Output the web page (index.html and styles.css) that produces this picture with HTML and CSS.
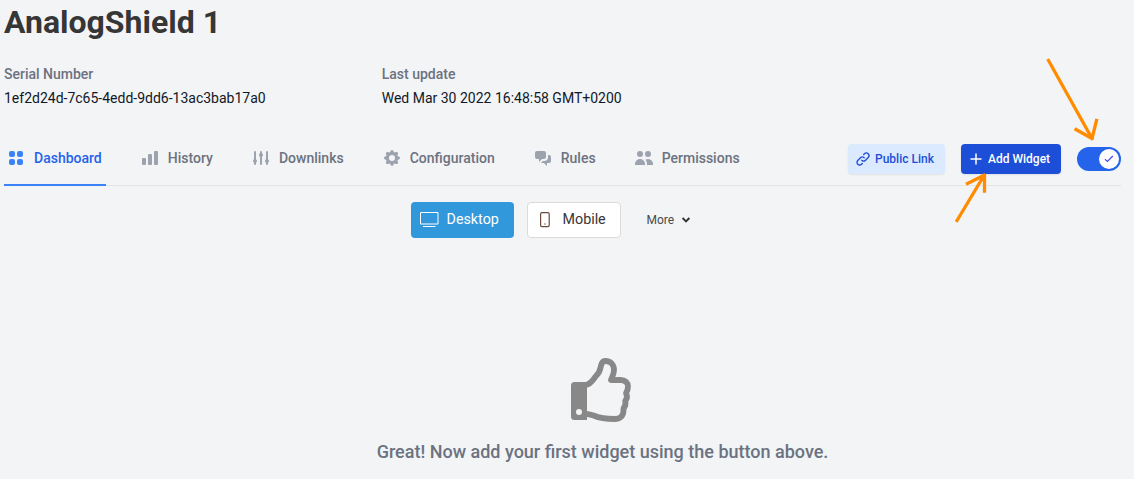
FILE: index.html
```html
<!DOCTYPE html>
<html lang="en">
<head>
<meta charset="utf-8">
<title>AnalogShield 1</title>
<link rel="stylesheet" href="styles.css">
</head>
<body>
<main class="page">
  <h1 class="title">AnalogShield 1</h1>
  <dl class="meta">
    <div class="meta-item"><dt>Serial Number</dt><dd>1ef2d24d-7c65-4edd-9dd6-13ac3bab17a0</dd></div>
    <div class="meta-item"><dt>Last update</dt><dd>Wed Mar 30 2022 16:48:58 GMT+0200</dd></div>
  </dl>
  <div class="bar">
    <nav class="tabs">
      <a class="tab active"><svg class="icon" viewBox="0 0 20 20"><path d="M5 3a2 2 0 00-2 2v2a2 2 0 002 2h2a2 2 0 002-2V5a2 2 0 00-2-2H5zM5 11a2 2 0 00-2 2v2a2 2 0 002 2h2a2 2 0 002-2v-2a2 2 0 00-2-2H5zM11 5a2 2 0 012-2h2a2 2 0 012 2v2a2 2 0 01-2 2h-2a2 2 0 01-2-2V5zM11 13a2 2 0 012-2h2a2 2 0 012 2v2a2 2 0 01-2 2h-2a2 2 0 01-2-2v-2z"/></svg><span>Dashboard</span></a>
      <a class="tab"><svg class="icon" viewBox="0 0 20 20"><path d="M2 11a1 1 0 011-1h2a1 1 0 011 1v5a1 1 0 01-1 1H3a1 1 0 01-1-1v-5zM8 7a1 1 0 011-1h2a1 1 0 011 1v9a1 1 0 01-1 1H9a1 1 0 01-1-1V7zM14 4a1 1 0 011-1h2a1 1 0 011 1v12a1 1 0 01-1 1h-2a1 1 0 01-1-1V4z"/></svg><span>History</span></a>
      <a class="tab"><svg class="icon" viewBox="0 0 20 20"><path d="M5 4a1 1 0 00-2 0v7.268a2 2 0 000 3.464V16a1 1 0 102 0v-1.268a2 2 0 000-3.464V4zM11 4a1 1 0 10-2 0v1.268a2 2 0 000 3.464V16a1 1 0 102 0V8.732a2 2 0 000-3.464V4zM16 3a1 1 0 011 1v7.268a2 2 0 010 3.464V16a1 1 0 11-2 0v-1.268a2 2 0 010-3.464V4a1 1 0 011-1z"/></svg><span>Downlinks</span></a>
      <a class="tab"><svg class="icon" viewBox="0 0 20 20"><path fill-rule="evenodd" d="M11.49 3.17c-.38-1.56-2.6-1.56-2.98 0a1.532 1.532 0 01-2.286.948c-1.372-.836-2.942.734-2.106 2.106.54.886.061 2.042-.947 2.287-1.561.379-1.561 2.6 0 2.978a1.532 1.532 0 01.947 2.287c-.836 1.372.734 2.942 2.106 2.106a1.532 1.532 0 012.287.947c.379 1.561 2.6 1.561 2.978 0a1.533 1.533 0 012.287-.947c1.372.836 2.942-.734 2.106-2.106a1.533 1.533 0 01.947-2.287c1.561-.379 1.561-2.6 0-2.978a1.532 1.532 0 01-.947-2.287c.836-1.372-.734-2.942-2.106-2.106a1.532 1.532 0 01-2.287-.947zM10 13a3 3 0 100-6 3 3 0 000 6z"/></svg><span>Configuration</span></a>
      <a class="tab"><svg class="icon" viewBox="0 0 20 20"><path d="M2 5a2 2 0 012-2h7a2 2 0 012 2v4a2 2 0 01-2 2H9l-3 3v-3H4a2 2 0 01-2-2V5z"/><path d="M15 7v2a4 4 0 01-4 4H9.828l-1.766 1.767c.28.149.599.233.938.233h2l3 3v-3h2a2 2 0 002-2V9a2 2 0 00-2-2h-1z"/></svg><span>Rules</span></a>
      <a class="tab"><svg class="icon" viewBox="0 0 20 20"><path d="M9 6a3 3 0 11-6 0 3 3 0 016 0zM17 6a3 3 0 11-6 0 3 3 0 016 0zM12.93 17c.046-.327.07-.66.07-1a6.97 6.970 0 00-1.5-4.33A5 5 0 0119 16v1h-6.070zM6 11a5 5 0 015 5v1H1v-1a5 5 0 015-5z"/></svg><span>Permissions</span></a>
    </nav>
    <div class="actions">
      <button class="btn public"><svg class="link" viewBox="0 0 24 24"><path d="M13.828 10.172a4 4 0 00-5.656 0l-4 4a4 4 0 105.656 5.656l1.102-1.101m-.758-4.899a4 4 0 005.656 0l4-4a4 4 0 00-5.656-5.656l-1.100 1.100"/></svg><span>Public Link</span></button>
      <button class="btn add"><svg class="plus" viewBox="0 0 12 12"><path d="M6 .5v11M.5 6h11"/></svg><span>Add Widget</span></button>
      <div class="toggle"><span class="knob"><svg class="check" viewBox="0 0 10 8"><path d="M1 4.300 3.400 6.500 8.800 1"/></svg></span></div>
    </div>
  </div>
  <div class="views">
    <button class="view desktop"><svg class="monitor" viewBox="0 0 19 16"><path d="M.5.500h17.500v11.500H.5zM3 14.500h12.500"/></svg><span>Desktop</span></button>
    <button class="view mobile"><svg class="phone" viewBox="0 0 10 16"><rect x=".6" y=".6" width="8.600" height="14" rx="1.300"/><path d="M4.200 12h1.500"/></svg><span>Mobile</span></button>
    <button class="more"><span>More</span><svg class="chevron" viewBox="0 0 8 6"><path d="m.6 1 3.400 3.400 3.400-3.400"/></svg></button>
  </div>
  <section class="empty">
    <svg class="thumb" viewBox="0 0 60 64"><path class="cuff" fill-rule="evenodd" d="M3.500 24H16v38H3.500A3.500 3.500 0 010 58.500v-31A3.500 3.500 0 013.500 24zM8 51a3 3 0 100 6 3 3 0 000-6z"/><path class="hand" d="M15 27c5-1 6-4 10-9 5-5 4-8 5.500-12 .7-2 2-3 4-3C40 3 43 7 43 12c0 4-2 7-3 10h9.500c5 0 7.500 3 7.500 6.500 0 3-1 5-2 6.500 1.500 3 1 6-.8 8 .8 3 0 5.500-1.700 7.500.5 7-2.500 10.500-9 10.500-10 0-15-1-21-3.500-3-1-5-1.500-7.500-1.500"/></svg>
    <p>Great! Now add your first widget using the button above.</p>
  </section>
</main>
<svg class="arrows" viewBox="0 0 1134 479"><path d="M1048.500 60.500l43.500 78M1076 129.500l16 9 4.500-18M957 220.500l27-45M967.500 183.500l17-8.500v16"/></svg>
</body>
</html>
```
FILE: styles.css
```css
* { box-sizing: border-box; }
body {
  margin: 0;
  height: 479px;
  overflow: hidden;
  position: relative;
  background: #f3f4f6;
  font-family: Roboto, sans-serif;
  font-size: 14px;
}
button { font: inherit; border: 0; margin: 0; padding: 0; background: none; }
svg { display: block; flex: none; overflow: visible; }
.page { width: 1121px; padding-left: 4px; }
.title { margin: 0; padding-top: 2px; height: 64px; font-size: 32px; line-height: 40px; font-weight: 700; color: #363636; }
.meta { margin: 0; display: grid; grid-template-columns: 377.7px 1fr; height: 68px; }
dt { line-height: 20px; font-weight: 500; color: #6b7280; }
dd { margin: 4px 0 0; line-height: 20px; color: #111827; }
.bar { height: 54px; display: flex; justify-content: space-between; border-bottom: 1px solid #e2e4e8; }
.tabs { display: flex; gap: 32.05px; }
.tab { height: 54px; padding: 0 4px 2px; display: flex; align-items: center; gap: 8px; color: #6b7280; font-weight: 500; white-space: nowrap; }
.tab.active { color: #2563eb; border-bottom: 2px solid #3b82f6; padding-bottom: 0; }
.icon { width: 20px; height: 20px; margin-left: -2px; fill: #9ca3af; }
.active .icon { fill: #3b82f6; }
.actions { display: flex; align-items: center; gap: 16px; padding-top: 1px; }
.btn { height: 30px; border-radius: 4px; padding: 0 11px 0 8px; display: flex; align-items: center; font-size: 12px; font-weight: 500; white-space: nowrap; box-shadow: 0 1px 2px rgba(0,0,0,.08); }
.public { width: 97px; background: #dbeafe; color: #1d4ed8; padding-left: 7px; gap: 4px; }
.add { width: 100px; background: #1d4ed8; color: #fff; padding-left: 9px; gap: 6px; }
.link { width: 16px; height: 16px; fill: none; stroke: #1d4ed8; stroke-width: 2; stroke-linecap: round; }
.plus { width: 12px; height: 12px; fill: none; stroke: #fff; stroke-width: 1.5; }
.toggle { width: 44px; height: 24px; border-radius: 12px; background: #2563eb; padding: 2px; display: flex; justify-content: flex-end; }
.knob { width: 20px; height: 20px; border-radius: 50%; background: #fff; display: flex; align-items: center; justify-content: center; }
.check { width: 10px; height: 8px; fill: none; stroke: #4f46e5; stroke-width: 1.2; }
.views { margin: 16px 0 0 407px; display: flex; align-items: center; height: 36px; }
.view { height: 36px; border-radius: 4px; display: flex; align-items: center; padding-bottom: 2px; font-size: 14.3px; }
.desktop { width: 103px; background: #3298dc; color: #fff; padding-left: 8.5px; gap: 8px; }
.mobile { width: 94px; margin-left: 13px; background: #fff; border: 1px solid #dbdbdb; color: #363636; padding-left: 12px; gap: 12.5px; }
.monitor { width: 19px; height: 16px; fill: none; stroke: #fff; stroke-width: 1; position: relative; top: 1px; }
.phone { width: 10px; height: 16px; fill: none; stroke: #6b4a40; stroke-width: 1.2; position: relative; top: 1px; }
.more { margin-left: 25.5px; display: flex; align-items: center; gap: 8px; font-size: 12px; color: #4a4a4a; }
.chevron { width: 8px; height: 6px; fill: none; stroke: #363636; stroke-width: 2; }
.empty { padding: 120px 0 0 80px; display: flex; flex-direction: column; align-items: center; }
.thumb { width: 60px; height: 64px; margin-right: 4px; }
.cuff { fill: #888; }
.hand { fill: none; stroke: #888; stroke-width: 5.8; stroke-linejoin: round; }
.empty p { margin: 16px 0 0; font-size: 18px; line-height: 28px; font-weight: 500; color: #6b7280; white-space: nowrap; }
.arrows { position: absolute; left: 0; top: 0; width: 1134px; height: 479px; fill: none; stroke: #ff8c00; stroke-width: 3.3; stroke-linecap: square; stroke-linejoin: round; pointer-events: none; }
```
